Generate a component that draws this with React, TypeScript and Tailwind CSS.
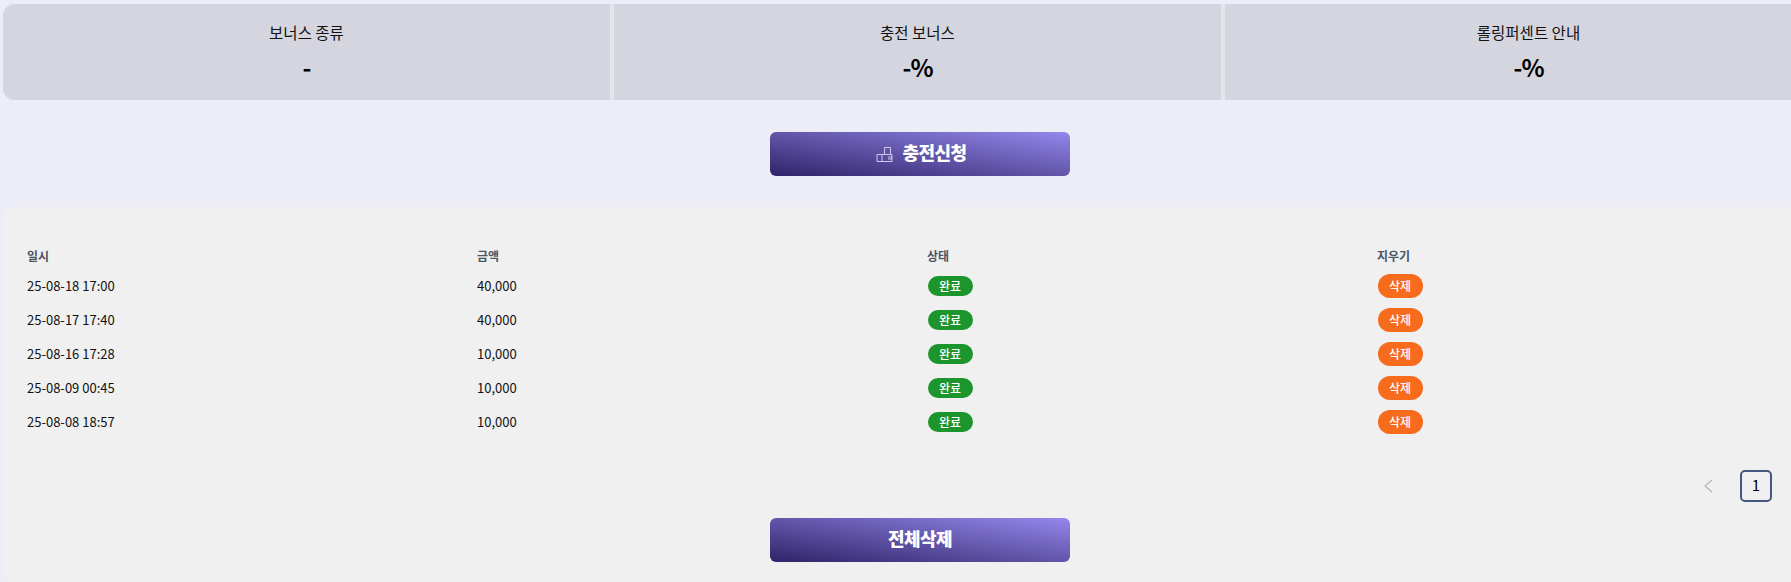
const FONT = "font-['Noto_Sans_CJK_KR','Noto_Sans',sans-serif]";

const STATS = [
  { label: "보너스 종류", value: "-", first: true },
  { label: "충전 보너스", value: "-%", first: false },
  { label: "롤링퍼센트 안내", value: "-%", first: false },
];

const ROWS = [
  { date: "25-08-18 17:00", amount: "40,000" },
  { date: "25-08-17 17:40", amount: "40,000" },
  { date: "25-08-16 17:28", amount: "10,000" },
  { date: "25-08-09 00:45", amount: "10,000" },
  { date: "25-08-08 18:57", amount: "10,000" },
];

function GradientButton({ children }: { children: React.ReactNode }) {
  return (
    <button className="flex h-[44px] w-[300px] items-center justify-center gap-[10px] rounded-[6px] bg-[linear-gradient(to_top_right,#2f2468,#9587ec)] pb-[3px] text-[18px] font-extrabold tracking-[-0.6px] text-white">
      {children}
    </button>
  );
}

export default function App() {
  return (
    <div className={`h-[582px] w-full overflow-hidden bg-[#ecedf6] ${FONT}`}>
      <div className="w-[1840px] pl-[3px] pr-[3px] pt-[4px]">
        {/* bonus summary */}
        <div className="grid grid-cols-[607px_607px_607px] gap-[4px] bg-[#e4e5ea] rounded-[12px]">
          {STATS.map((s) => (
            <div
              key={s.label}
              className={`flex h-[96px] flex-col items-center bg-[#d4d5de] pt-[17px] ${s.first ? "rounded-l-[12px]" : ""}`}
            >
              <span className="text-[15.5px] leading-[22px] text-[#111]">{s.label}</span>
              <span className="mt-[6px] text-[24px] font-bold leading-[36px] tracking-[-1px] text-black">{s.value}</span>
            </div>
          ))}
        </div>

        <div className="flex justify-center pt-[32px] pb-[31px]">
          <GradientButton>
            <svg width="17" height="18" viewBox="0 0 17 18" fill="none" stroke="#cfc9ee" strokeWidth="1" className="mt-[3px] ml-[2px]">
              <path d="M1 9.5h5v7H1zM6 9.5h2.5V2.5h6v7H16v7H6M8.5 9.5h6M12 12h4M12 14h4" />
            </svg>
            충전신청
          </GradientButton>
        </div>

        {/* history */}
        <div className="rounded-[10px] bg-[#f0f0f0] px-[24px] pt-[37px] pb-[20px]">
          <div className="grid grid-cols-[450px_450px_450px_450px] pb-[0.5px] text-[12px] font-semibold leading-[24px] text-[#4b5563]">
            <div>일시</div>
            <div>금액</div>
            <div>상태</div>
            <div>지우기</div>
          </div>
          {ROWS.map((r) => (
            <div
              key={r.date}
              className="grid h-[34px] grid-cols-[450px_450px_450px_450px] items-center text-[13px] text-[#111]"
            >
              <div>{r.date}</div>
              <div>{r.amount}</div>
              <div>
                <span className="ml-[0.5px] flex h-[20px] w-[45px] items-center justify-center rounded-full bg-[#1c962c] text-[12px] font-medium text-white">
                  완료
                </span>
              </div>
              <div>
                <span className="ml-[0.5px] flex h-[24px] w-[45px] items-center justify-center rounded-full bg-[#f76b1c] text-[12px] font-medium text-white">
                  삭제
                </span>
              </div>
            </div>
          ))}

          <div className="flex items-center justify-end gap-[26px] pt-[31px] pr-[41px]">
            <svg width="12" height="16" viewBox="0 0 12 16" fill="none" stroke="#b5b5b5" strokeWidth="1.3">
              <path d="M10 2 3 8l7 6" />
            </svg>
            <span className="flex h-[32px] w-[32px] items-center justify-center rounded-[5px] border-2 border-[#46587f] text-[15px] text-black">
              1
            </span>
          </div>

          <div className="flex justify-center pt-[16px]">
            <GradientButton>전체삭제</GradientButton>
          </div>
        </div>
      </div>
    </div>
  );
}
